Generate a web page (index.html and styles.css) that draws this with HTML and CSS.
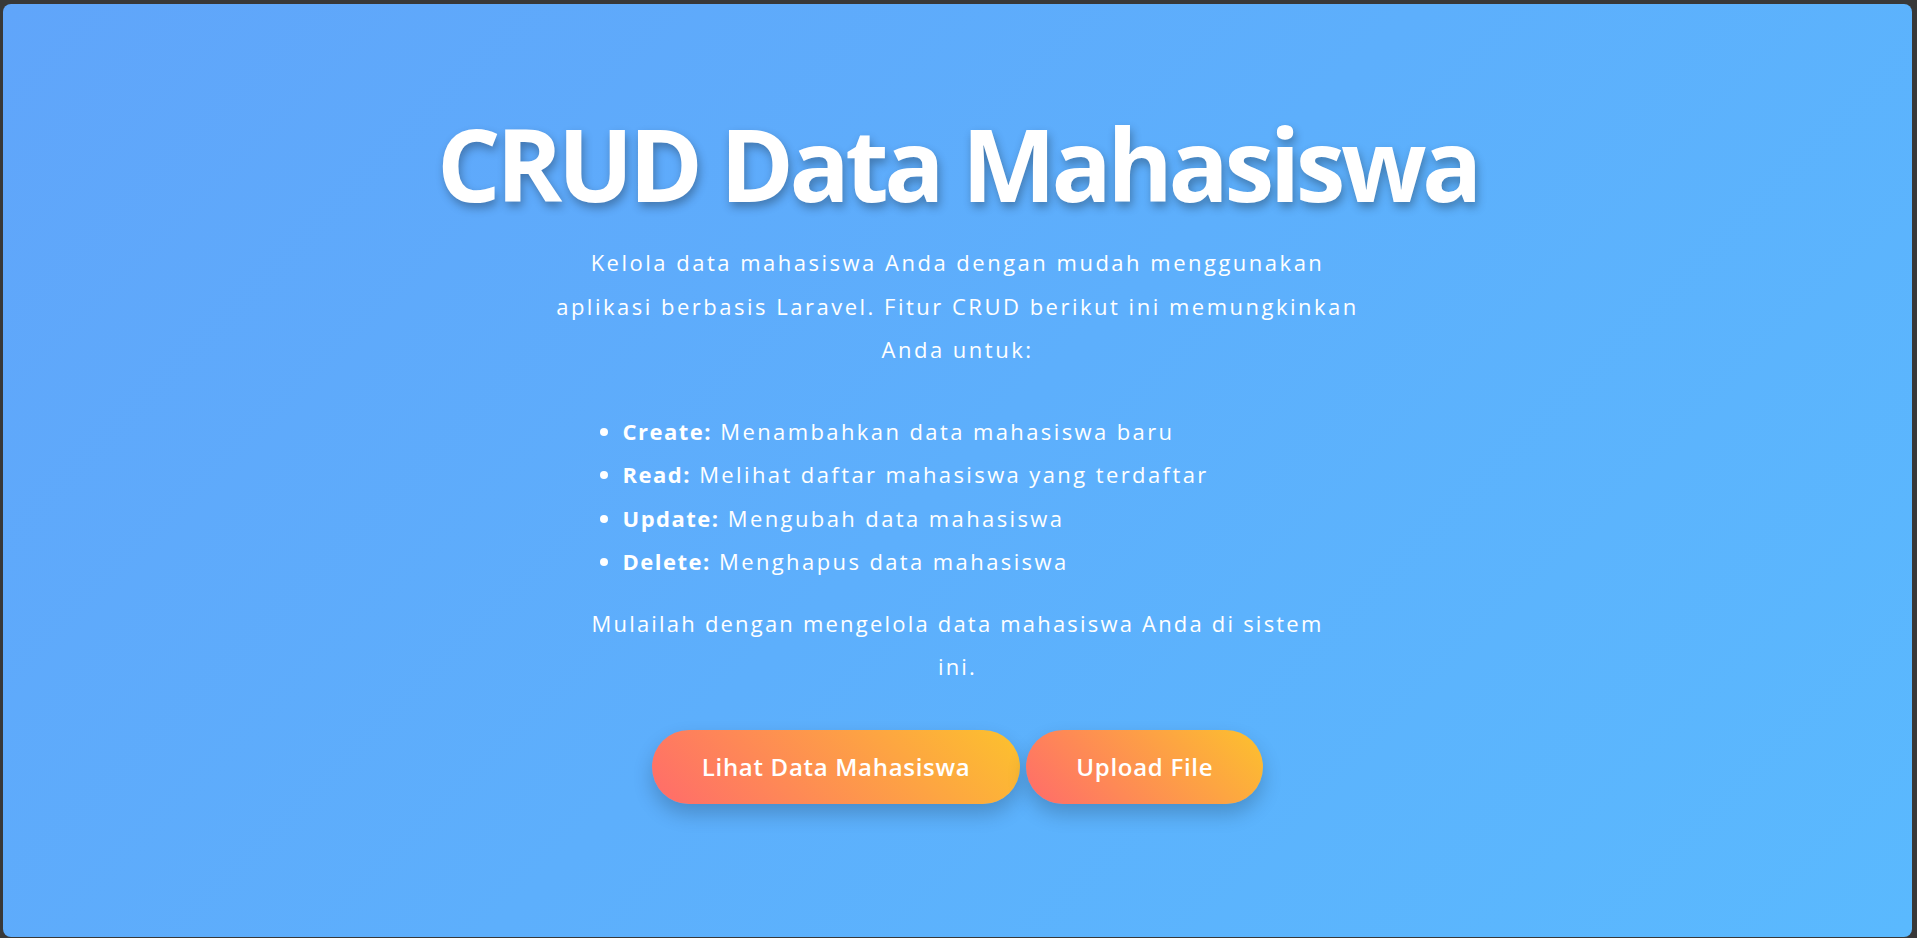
FILE: index.html
```html
<!DOCTYPE html>
<html lang="id">
<head>
<meta charset="utf-8">
<title>CRUD Data Mahasiswa</title>
<link rel="stylesheet" href="styles.css">
</head>
<body>
<main class="hero">
  <h1 class="hero-title">CRUD Data Mahasiswa</h1>
  <div class="hero-body">
    <p class="intro">Kelola data mahasiswa Anda dengan mudah menggunakan aplikasi berbasis Laravel. Fitur CRUD berikut ini memungkinkan Anda untuk:</p>
    <ul class="features">
      <li><strong>Create:</strong> Menambahkan data mahasiswa baru</li>
      <li><strong>Read:</strong> Melihat daftar mahasiswa yang terdaftar</li>
      <li><strong>Update:</strong> Mengubah data mahasiswa</li>
      <li><strong>Delete:</strong> Menghapus data mahasiswa</li>
    </ul>
    <p class="outro">Mulailah dengan mengelola data mahasiswa Anda di sistem ini.</p>
    <div class="actions">
      <a class="btn" href="#">Lihat Data Mahasiswa</a>
      <a class="btn" href="#">Upload File</a>
    </div>
  </div>
</main>
</body>
</html>
```
FILE: styles.css
```css
html, body {
  margin: 0;
  height: 100%;
}
body {
  background: #383838;
  padding: 4px 5px 0 3px;
  box-sizing: border-box;
  font-family: "Open Sans", "DejaVu Sans", sans-serif;
  color: #ffffff;
  overflow: hidden;
}
.hero {
  height: calc(100vh - 5px);
  border-radius: 8px;
  background: linear-gradient(135deg, #60a5fa 0%, #5ab9fe 100%);
  display: flex;
  flex-direction: column;
  align-items: center;
  padding-top: 99px;
  box-sizing: border-box;
}
.hero-title {
  margin: 0;
  font-size: 100px;
  line-height: 120px;
  font-weight: 700;
  letter-spacing: -4.5px;
  text-shadow: 2px 5px 10px rgba(0, 0, 0, 0.3);
}
.hero-body {
  display: flex;
  flex-direction: column;
  align-items: center;
}
.intro, .outro {
  margin: 18px 0 0;
  font-size: 22px;
  line-height: 43.5px;
  text-align: center;
}
.intro {
  width: 815px;
  letter-spacing: 2.5px;
}
.features {
  width: 750px;
  box-sizing: border-box;
  margin: 38px 0 0;
  padding-left: 40px;
  font-size: 22px;
  line-height: 43.5px;
  letter-spacing: 2.4px;
}
.features strong {
  font-weight: 700;
  letter-spacing: 1.5px;
}
.outro {
  width: 760px;
  letter-spacing: 2.2px;
  margin-top: 18px;
}
.actions {
  display: flex;
  gap: 6px;
  margin-top: 41px;
}
.btn {
  display: block;
  padding: 19px 50px;
  line-height: 36px;
  font-size: 24px;
  font-weight: 600;
  letter-spacing: 0.7px;
  color: #ffffff;
  text-decoration: none;
  border-radius: 40px;
  background: linear-gradient(45deg, #ff6b6b 0%, #fcc22d 100%);
  box-shadow: 0 10px 20px rgba(0, 0, 0, 0.2);
}
```
